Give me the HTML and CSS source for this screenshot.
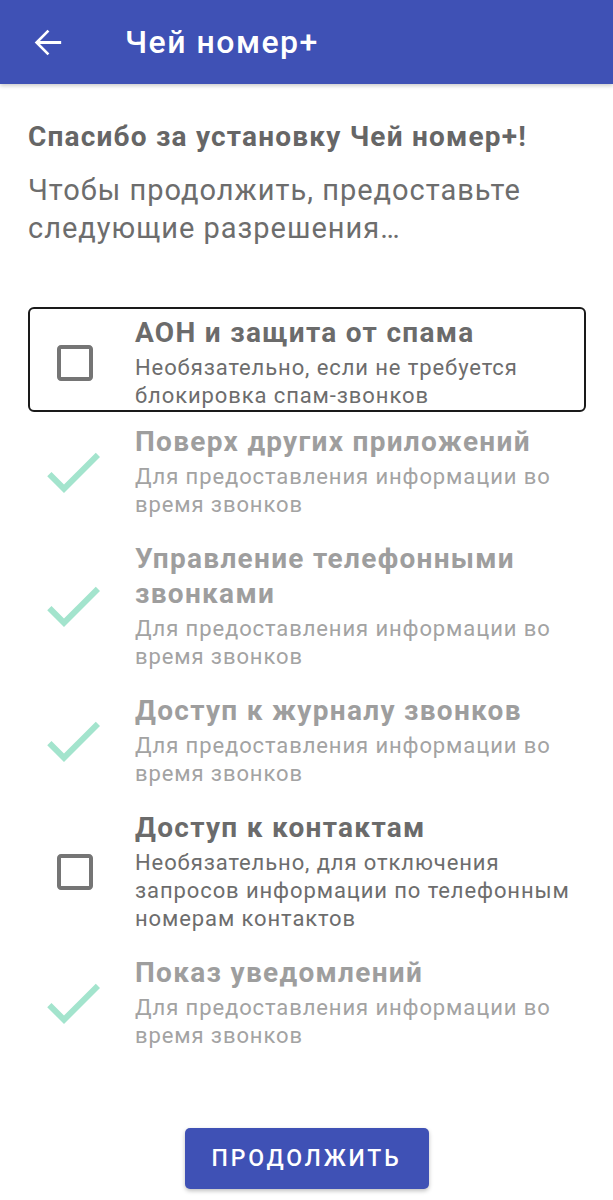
FILE: index.html
```html
<!DOCTYPE html>
<html lang="ru">
<head>
  <meta charset="UTF-8">
  <title>Чей номер+</title>
  <link rel="stylesheet" href="styles.css">
</head>
<body>
  <div class="page">
    <div class="toolbar">
      <svg class="toolbar-back" width="41" height="41" viewBox="0 0 24 24">
        <path d="M20 11.1H7.6l5.5-5.5L12 4.5l-7.5 7.5 7.5 7.5 1.1-1.1-5.5-5.5H20v-1.8z" fill="#fff"/>
      </svg>
      <h1>Чей номер+</h1>
    </div>

    <div class="content">
      <h2 class="intro-title">Спасибо за установку Чей номер+!</h2>
      <p class="intro-text">Чтобы продолжить, предоставьте следующие разрешения…</p>

      <div class="perm-list">
        <div class="perm perm-pending perm-active">
          <div class="perm-icon perm-icon-box">
            <svg width="48" height="48" viewBox="0 0 24 24"><path d="M19 5v14H5V5h14m0-2H5c-1.1 0-2 .9-2 2v14c0 1.1.9 2 2 2h14c1.1 0 2-.9 2-2V5c0-1.1-.9-2-2-2z" fill="#757575"/></svg>
          </div>
          <div class="perm-body">
            <div class="perm-title">АОН и защита от спама</div>
            <div class="perm-desc">Необязательно, если не требуется блокировка спам-звонков</div>
          </div>
        </div>

        <div class="perm perm-done">
          <div class="perm-icon">
            <svg width="72" height="72" viewBox="0 0 24 24"><path d="M9 16.17L4.83 12l-1.42 1.41L9 19 21 7l-1.41-1.41z" fill="#a3e4cd"/></svg>
          </div>
          <div class="perm-body">
            <div class="perm-title">Поверх других приложений</div>
            <div class="perm-desc">Для предоставления информации во время звонков</div>
          </div>
        </div>

        <div class="perm perm-done">
          <div class="perm-icon">
            <svg width="72" height="72" viewBox="0 0 24 24"><path d="M9 16.17L4.83 12l-1.42 1.41L9 19 21 7l-1.41-1.41z" fill="#a3e4cd"/></svg>
          </div>
          <div class="perm-body">
            <div class="perm-title">Управление телефонными звонками</div>
            <div class="perm-desc">Для предоставления информации во время звонков</div>
          </div>
        </div>

        <div class="perm perm-done">
          <div class="perm-icon">
            <svg width="72" height="72" viewBox="0 0 24 24"><path d="M9 16.17L4.83 12l-1.42 1.41L9 19 21 7l-1.41-1.41z" fill="#a3e4cd"/></svg>
          </div>
          <div class="perm-body">
            <div class="perm-title">Доступ к журналу звонков</div>
            <div class="perm-desc">Для предоставления информации во время звонков</div>
          </div>
        </div>

        <div class="perm perm-pending">
          <div class="perm-icon perm-icon-box">
            <svg width="48" height="48" viewBox="0 0 24 24"><path d="M19 5v14H5V5h14m0-2H5c-1.1 0-2 .9-2 2v14c0 1.1.9 2 2 2h14c1.1 0 2-.9 2-2V5c0-1.1-.9-2-2-2z" fill="#757575"/></svg>
          </div>
          <div class="perm-body">
            <div class="perm-title">Доступ к контактам</div>
            <div class="perm-desc">Необязательно, для отключения запросов информации по телефонным номерам контактов</div>
          </div>
        </div>

        <div class="perm perm-done">
          <div class="perm-icon">
            <svg width="72" height="72" viewBox="0 0 24 24"><path d="M9 16.17L4.83 12l-1.42 1.41L9 19 21 7l-1.41-1.41z" fill="#a3e4cd"/></svg>
          </div>
          <div class="perm-body">
            <div class="perm-title">Показ уведомлений</div>
            <div class="perm-desc">Для предоставления информации во время звонков</div>
          </div>
        </div>
      </div>
    </div>

    <div class="footer">
      <button class="continue-btn">Продолжить</button>
    </div>
  </div>
</body>
</html>
```

FILE: styles.css
```css
body {
  margin: 0;
  font-family: Roboto, 'Noto Sans', sans-serif;
  background: #fff;
  color: #666;
}

.page {
  display: flex;
  flex-direction: column;
  min-height: 100vh;
}

.toolbar {
  display: flex;
  align-items: center;
  height: 84px;
  background: #3f51b5;
  box-shadow: 0 2px 4px rgba(0,0,0,0.2);
}

.toolbar-back {
  margin-left: 27px;
  margin-right: 57px;
}

.toolbar h1 {
  margin: 0;
  font-size: 32px;
  font-weight: 500;
  letter-spacing: 1.5px;
  color: #fff;
}

.content {
  padding: 0 27px 0 28px;
}

.intro-title {
  margin: 38px 0 0;
  font-size: 28px;
  line-height: 30px;
  font-weight: 700;
  letter-spacing: 1.2px;
  color: #666;
}

.intro-text {
  margin: 19px 0 0;
  font-size: 29px;
  line-height: 38px;
  letter-spacing: 1px;
  color: #6d6d6d;
}

.perm-list {
  display: flex;
  flex-direction: column;
  gap: 12px;
  margin-top: 60px;
}

.perm {
  display: flex;
  align-items: center;
  padding: 6px 0 0;
  border: 2px solid transparent;
  border-radius: 6px;
}

.perm-active {
  border-color: #1a1a1a;
  margin-bottom: -8px;
}

.perm-icon {
  flex: none;
  display: flex;
  align-items: center;
  justify-content: center;
  width: 72px;
  margin-left: 7px;
  margin-right: 26px;
}

.perm-icon-box svg {
  margin-left: 4px;
}

.perm-body {
  flex: 1;
}

.perm-title {
  font-size: 28px;
  line-height: 35px;
  font-weight: 700;
  letter-spacing: 1.3px;
}

.perm-desc {
  margin-top: 4px;
  font-size: 22px;
  line-height: 28px;
  letter-spacing: 0.9px;
}

.perm-pending .perm-title {
  color: #6b6b6b;
}

.perm-pending .perm-desc {
  color: #6d6d6d;
}

.perm-done .perm-title {
  color: #9e9e9e;
}

.perm-done .perm-desc {
  color: #a3a3a3;
}

.footer {
  margin-top: auto;
  display: flex;
  justify-content: center;
  padding: 0 0 11px;
}

.continue-btn {
  width: 244px;
  height: 61px;
  border: none;
  border-radius: 5px;
  background: #3f51b5;
  color: #fff;
  font-family: Roboto, 'Noto Sans', sans-serif;
  font-size: 23px;
  font-weight: 500;
  letter-spacing: 2.8px;
  text-transform: uppercase;
  box-shadow: 0 2px 4px rgba(0,0,0,0.25);
}
```
